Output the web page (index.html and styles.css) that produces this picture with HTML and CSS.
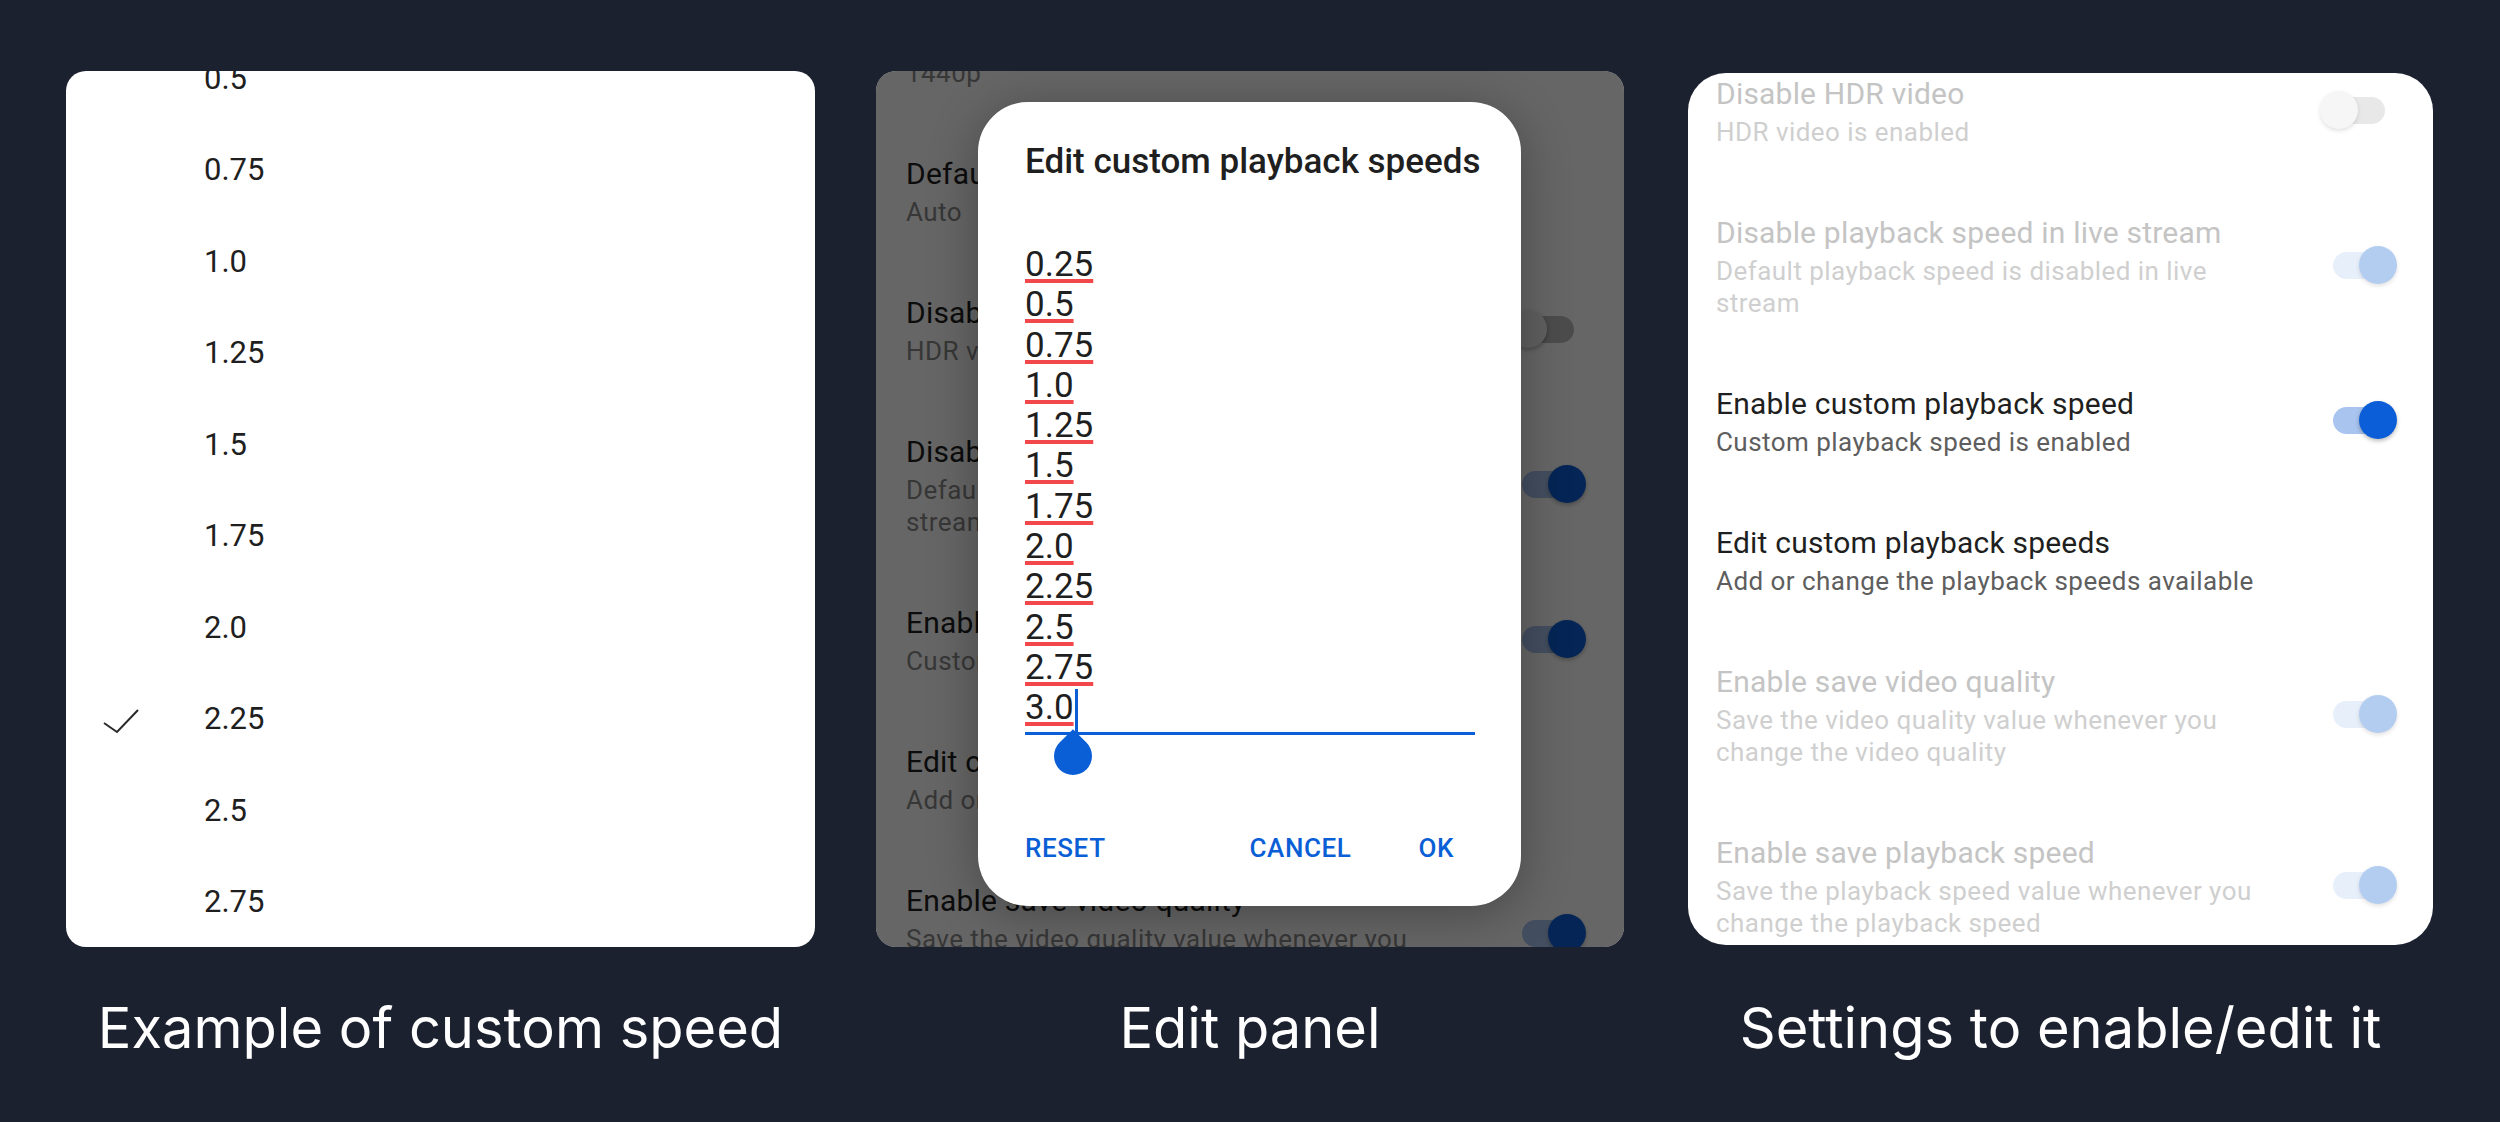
FILE: index.html
```html
<!DOCTYPE html>
<html lang="en">
<head>
<meta charset="utf-8">
<title>Custom playback speed</title>
<link rel="stylesheet" href="styles.css">
</head>
<body>
<main class="showcase">
  <section class="col col-speeds">
    <div class="panel panel-speeds">
      <ul class="speed-list">
        <li class="speed"><span></span><span>0.5</span></li>
        <li class="speed"><span></span><span>0.75</span></li>
        <li class="speed"><span></span><span>1.0</span></li>
        <li class="speed"><span></span><span>1.25</span></li>
        <li class="speed"><span></span><span>1.5</span></li>
        <li class="speed"><span></span><span>1.75</span></li>
        <li class="speed"><span></span><span>2.0</span></li>
        <li class="speed"><svg class="check" viewBox="0 0 36 26" width="36" height="26"><polyline points="1,15 14,24 35,2" fill="none" stroke="#2a2a2a" stroke-width="2"/></svg><span>2.25</span></li>
        <li class="speed"><span></span><span>2.5</span></li>
        <li class="speed"><span></span><span>2.75</span></li>
        <li class="speed"><span></span><span>3.0</span></li>
      </ul>
    </div>
    <p class="caption">Example of custom speed</p>
  </section>

  <section class="col col-edit">
    <div class="panel panel-edit">
      <div class="pref-list list-edit">
        <div class="pref"><div class="pref-text"><div class="pref-title">Default video quality on Wi-Fi network</div><div class="pref-summary">1440p</div></div></div>
        <div class="pref"><div class="pref-text"><div class="pref-title">Default playback speed</div><div class="pref-summary">Auto</div></div></div>
        <div class="pref"><div class="pref-text"><div class="pref-title">Disable HDR video</div><div class="pref-summary">HDR video is enabled</div></div><div class="switch"><span class="track"></span><span class="thumb"></span></div></div>
        <div class="pref"><div class="pref-text"><div class="pref-title">Disable playback speed in live stream</div><div class="pref-summary">Default playback speed is disabled in live<br>stream</div></div><div class="switch on"><span class="track"></span><span class="thumb"></span></div></div>
        <div class="pref"><div class="pref-text"><div class="pref-title">Enable custom playback speed</div><div class="pref-summary">Custom playback speed is enabled</div></div><div class="switch on"><span class="track"></span><span class="thumb"></span></div></div>
        <div class="pref"><div class="pref-text"><div class="pref-title">Edit custom playback speeds</div><div class="pref-summary">Add or change the playback speeds available</div></div></div>
        <div class="pref"><div class="pref-text"><div class="pref-title">Enable save video quality</div><div class="pref-summary">Save the video quality value whenever you<br>change the video quality</div></div><div class="switch on"><span class="track"></span><span class="thumb"></span></div></div>
      </div>
      <div class="scrim"></div>
      <div class="dialog">
        <h2 class="dialog-title">Edit custom playback speeds</h2>
        <div class="speeds-field">
          <div><span class="misspelt">0.25</span></div>
          <div><span class="misspelt">0.5</span></div>
          <div><span class="misspelt">0.75</span></div>
          <div><span class="misspelt">1.0</span></div>
          <div><span class="misspelt">1.25</span></div>
          <div><span class="misspelt">1.5</span></div>
          <div><span class="misspelt">1.75</span></div>
          <div><span class="misspelt">2.0</span></div>
          <div><span class="misspelt">2.25</span></div>
          <div><span class="misspelt">2.5</span></div>
          <div><span class="misspelt">2.75</span></div>
          <div><span class="misspelt">3.0</span><span class="caret"></span></div>
        </div>
        <span class="handle"></span>
        <div class="dialog-buttons">
          <span class="btn btn-reset">RESET</span>
          <span class="btn">CANCEL</span>
          <span class="btn btn-ok">OK</span>
        </div>
      </div>
    </div>
    <p class="caption">Edit panel</p>
  </section>

  <section class="col col-settings">
    <div class="panel panel-settings">
      <div class="pref-list list-settings">
        <div class="pref disabled"><div class="pref-text"><div class="pref-title">Disable HDR video</div><div class="pref-summary">HDR video is enabled</div></div><div class="switch"><span class="track"></span><span class="thumb"></span></div></div>
        <div class="pref disabled"><div class="pref-text"><div class="pref-title">Disable playback speed in live stream</div><div class="pref-summary">Default playback speed is disabled in live<br>stream</div></div><div class="switch on"><span class="track"></span><span class="thumb"></span></div></div>
        <div class="pref"><div class="pref-text"><div class="pref-title">Enable custom playback speed</div><div class="pref-summary">Custom playback speed is enabled</div></div><div class="switch on"><span class="track"></span><span class="thumb"></span></div></div>
        <div class="pref"><div class="pref-text"><div class="pref-title">Edit custom playback speeds</div><div class="pref-summary">Add or change the playback speeds available</div></div></div>
        <div class="pref disabled"><div class="pref-text"><div class="pref-title">Enable save video quality</div><div class="pref-summary">Save the video quality value whenever you<br>change the video quality</div></div><div class="switch on"><span class="track"></span><span class="thumb"></span></div></div>
        <div class="pref disabled"><div class="pref-text"><div class="pref-title">Enable save playback speed</div><div class="pref-summary">Save the playback speed value whenever you<br>change the playback speed</div></div><div class="switch on"><span class="track"></span><span class="thumb"></span></div></div>
      </div>
    </div>
    <p class="caption">Settings to enable/edit it</p>
  </section>
</main>
</body>
</html>
```

FILE: styles.css
```css
html, body {
  margin: 0;
  padding: 0;
  background: #1c2130;
}

.showcase {
  display: flex;
  padding: 71px 0 0 66px;
}

.col {
  display: flex;
  flex-direction: column;
  align-items: center;
}

.col-speeds {
  width: 749px;
}

.col-edit {
  width: 748px;
  margin-left: 61px;
}

.col-settings {
  width: 745px;
  margin-left: 64px;
}

.panel {
  position: relative;
  width: 100%;
  height: 876px;
  background: #ffffff;
  border-radius: 20px;
  overflow: hidden;
  font-family: Roboto, "Noto Sans", sans-serif;
}

.panel-settings {
  height: 872px;
  margin: 2px 0;
  border-radius: 38px;
}

.caption {
  margin: 47px 0 0;
  font-family: Inter, "Noto Sans", sans-serif;
  font-size: 56px;
  line-height: 68px;
  font-weight: 400;
  color: #ffffff;
  letter-spacing: 0;
  white-space: nowrap;
}

/* ---------- speed list ---------- */
.speed-list {
  list-style: none;
  margin: -38.75px 0 0;
  padding: 0;
}

.speed {
  height: 91.5px;
  display: grid;
  grid-template-columns: 138px auto;
  align-items: center;
  font-size: 31px;
  color: #1f1f1f;
}

.check {
  margin-left: 37px;
  margin-top: 4px;
  display: block;
}

/* ---------- preference list ---------- */
.pref-list {
  display: flex;
  flex-direction: column;
}

.list-edit {
  margin-top: -89.5px;
}

.list-settings {
  margin-top: -32.5px;
}

.pref {
  display: flex;
  align-items: center;
  padding: 31.5px 36px 31.5px 28px;
}

.list-edit .pref {
  padding-left: 30px;
  padding-right: 38px;
}

.pref-text {
  flex: 1;
  min-width: 0;
  white-space: nowrap;
}

.pref-title {
  font-size: 30px;
  line-height: 44px;
  color: #1f1f1f;
  letter-spacing: 0.2px;
}

.pref-summary {
  font-size: 26px;
  line-height: 32px;
  color: #5e5e5e;
  letter-spacing: 0.45px;
}

.list-edit .pref-summary {
  color: #8a8a8a;
}

.pref.disabled .pref-title {
  color: #c4c4c4;
}

.pref.disabled .pref-summary {
  color: #cfcfcf;
}

/* ---------- switch ---------- */
.switch {
  position: relative;
  flex: none;
  width: 77px;
  height: 38px;
}

.switch .track {
  position: absolute;
  left: 13px;
  top: 5.5px;
  width: 52px;
  height: 27px;
  border-radius: 14px;
  background: #bdbdbd;
}

.switch .thumb {
  position: absolute;
  left: 0;
  top: 0;
  width: 38px;
  height: 38px;
  border-radius: 50%;
  background: #f1f1f1;
  box-shadow: 0 2px 4px rgba(0, 0, 0, 0.28);
}

.switch.on .track {
  background: #a8c4ef;
}

.switch.on .thumb {
  left: 39px;
  background: #0b5ed7;
}

.pref.disabled .switch .track {
  background: #e8e8e8;
}

.pref.disabled .switch .thumb {
  background: #f6f6f6;
  box-shadow: 0 2px 4px rgba(0, 0, 0, 0.12);
}

.pref.disabled .switch.on .track {
  background: #e7effb;
}

.pref.disabled .switch.on .thumb {
  background: #b3cdf1;
}

/* ---------- dialog ---------- */
.scrim {
  position: absolute;
  inset: 0;
  background: rgba(0, 0, 0, 0.6);
}

.dialog {
  position: absolute;
  left: 102px;
  top: 31px;
  width: 543px;
  height: 804px;
  box-sizing: border-box;
  padding: 38px 46px 0 47px;
  background: #ffffff;
  border-radius: 50px;
  box-shadow: 0 8px 50px rgba(0, 0, 0, 0.3);
  display: flex;
  flex-direction: column;
}

.dialog-title {
  margin: 0;
  font-size: 35px;
  line-height: 44px;
  font-weight: 500;
  color: #1f1f1f;
  white-space: nowrap;
}

.speeds-field {
  margin-top: 61px;
  padding-bottom: 3px;
  border-bottom: 3px solid #0b5fd6;
  font-size: 35px;
  line-height: 40.3px;
  color: #1f1f1f;
}

.misspelt {
  text-decoration: underline;
  text-decoration-color: #f2474b;
  text-decoration-thickness: 4px;
  text-underline-offset: 3px;
}

.caret {
  display: inline-block;
  width: 3px;
  height: 46px;
  margin-left: 1px;
  margin-bottom: -16px;
  background: #0b5fd6;
}

.handle {
  position: absolute;
  left: 76px;
  top: 635px;
  width: 38px;
  height: 38px;
  background: #0b5fd6;
  border-radius: 0 50% 50% 50%;
  transform: rotate(45deg);
}

.dialog-buttons {
  margin-top: 93.4px;
  display: flex;
  line-height: 40px;
}

.btn {
  font-size: 26px;
  font-weight: 500;
  letter-spacing: 0.6px;
  color: #0b5fd6;
}

.btn-reset {
  margin-right: auto;
}

.btn-ok {
  margin-left: 67px;
  margin-right: 21px;
}
```
